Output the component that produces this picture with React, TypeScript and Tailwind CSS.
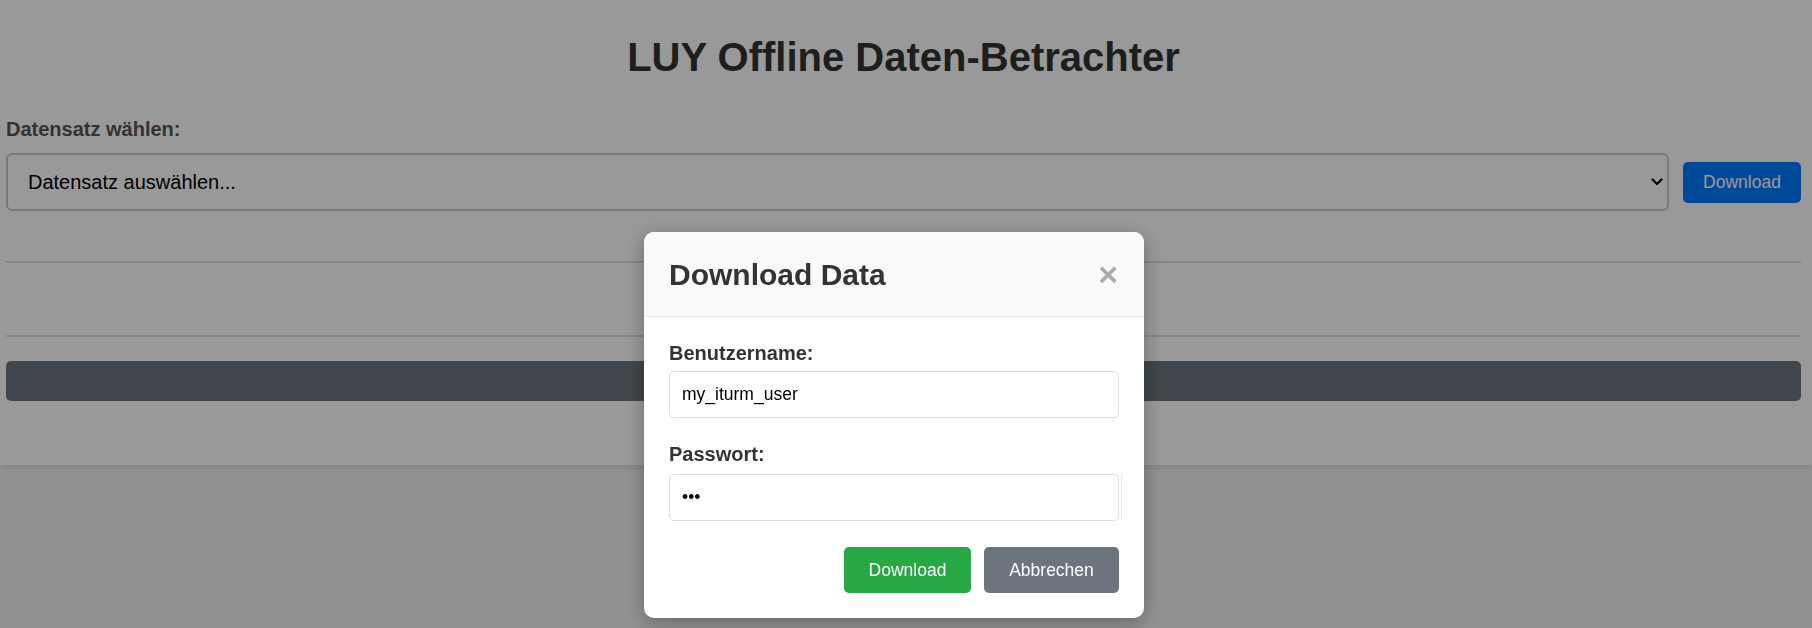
export default function App() {
  return (
    <div className="relative min-h-[628px] bg-[#f3f3f3] font-['Liberation_Sans',Arial,sans-serif]">
      {/* ── Page ── */}
      <div className="h-[465px] bg-white pl-[6px] pr-[11px] shadow-[0_2px_6px_rgba(0,0,0,0.12)]">
        <h1 className="pt-[34px] text-center text-[40px] font-bold leading-[46px] text-[#333]">
          LUY Offline Daten-Betrachter
        </h1>

        <label className="mt-[38px] block text-[20px] font-bold leading-[23px] text-[#555]">
          Datensatz wählen:
        </label>
        <div className="mt-[12px] flex items-center gap-[14px]">
          <div className="flex h-[58px] flex-1 items-center justify-between rounded-[6px] border-2 border-[#ccc] pl-[20px] pr-[4px] text-[20px] text-black">
            <span>Datensatz auswählen...</span>
            <svg width="12" height="8" viewBox="0 0 12 8" fill="none" stroke="#000" strokeWidth="2.2" strokeLinecap="round" strokeLinejoin="round">
              <polyline points="1.5,1.5 6,6 10.5,1.5" />
            </svg>
          </div>
          <button className="h-[41px] w-[118px] rounded-[5px] bg-[#007bff] text-[17.5px] text-white">
            Download
          </button>
        </div>

        <hr className="mt-[50px] border-0 border-t-2 border-[#dee2e6]" />
        <hr className="mt-[72px] border-0 border-t-2 border-[#dee2e6]" />
        <div className="mt-[24px] h-[40px] rounded-[5px] bg-[#6c757d]" />
      </div>

      {/* ── Modal ── */}
      <div className="fixed inset-0 flex items-start justify-center bg-black/40 pt-[232px] pr-[24px]">
        <div className="w-[500px] overflow-hidden rounded-[10px] bg-white shadow-[0_5px_20px_rgba(0,0,0,0.3)]">
          <div className="flex h-[85px] items-center justify-between border-b border-[#e9ecef] bg-[#f8f9fa] pl-[25px] pr-[26px]">
            <h2 className="text-[30px] font-bold text-[#333]">Download Data</h2>
            <span className="text-[34px] font-bold leading-none text-[#aaa]">×</span>
          </div>

          <div className="p-[25px]">
            <label className="block text-[20px] font-bold leading-[23px] text-[#333]">Benutzername:</label>
            <input
              readOnly
              value="my_iturm_user"
              className="mt-[6px] block h-[47px] w-full rounded-[5px] border border-[#ddd] bg-white px-[12px] text-[17.5px] text-black outline-none"
            />

            <label className="mt-[25px] block text-[20px] font-bold leading-[23px] text-[#333]">Passwort:</label>
            <div className="relative mt-[8px]">
              <input
                readOnly
                type="password"
                value="abc"
                className="block h-[47px] w-full rounded-[5px] border border-[#ddd] bg-white px-[12px] text-[17.5px] text-black outline-none"
              />
              <span className="absolute right-[-3px] top-0 h-[46px] w-px bg-[#e3ebf5]" />
            </div>

            <div className="mt-[26px] flex justify-end gap-[13px]">
              <button className="h-[46px] w-[127px] rounded-[5px] bg-[#28a745] text-[17.5px] text-white">Download</button>
              <button className="h-[46px] w-[135px] rounded-[5px] bg-[#6c757d] text-[17.5px] text-white">Abbrechen</button>
            </div>
          </div>
        </div>
      </div>
    </div>
  );
}
